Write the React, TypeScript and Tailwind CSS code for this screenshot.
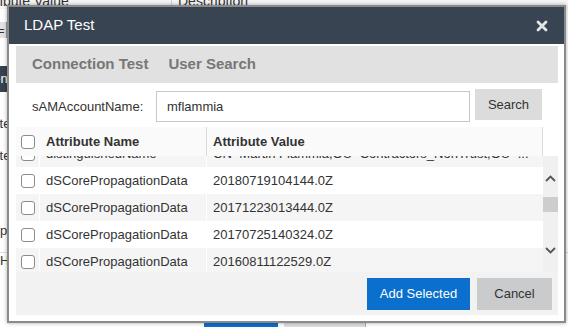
import React from 'react';

const rows = [
  { name: 'distinguishedName', value: 'CN=Martin Flammia,OU=Contractors_NonTrust,OU=...' },
  { name: 'dSCorePropagationData', value: '20180719104144.0Z' },
  { name: 'dSCorePropagationData', value: '20171223013444.0Z' },
  { name: 'dSCorePropagationData', value: '20170725140324.0Z' },
  { name: 'dSCorePropagationData', value: '20160811122529.0Z' },
];

function Checkbox() {
  return <span className="block h-[14px] w-[14px] rounded-[3px] border border-[#8c8c8c] bg-white" />;
}

function Chevron({ up }: { up?: boolean }) {
  return (
    <svg width="15" height="7" viewBox="0 0 15 7" className="block">
      <path
        d={up ? 'M3 6 L7.5 1.5 L12 6' : 'M3 1 L7.5 5.5 L12 1'}
        fill="none"
        stroke="#555"
        strokeWidth="1.8"
      />
    </svg>
  );
}

// the page behind the modal, only slivers of it show
function BackgroundPage() {
  return (
    <div className="flex flex-col text-[13px] text-[#333]">
      <div className="-mt-[7px] flex h-[16px] bg-[#f5f5f5] text-[14px] leading-[16px]">
        <div className="-ml-[30px] w-[202px] whitespace-nowrap border-r border-[#cfcfcf] pl-[8px]">Attribute Value</div>
        <div className="pl-[6px]">Description</div>
      </div>
      <div className="mt-[13px] flex h-[16px] w-[7px] items-center overflow-hidden border-r border-[#999] bg-[#e2e2e2] leading-none">
        <span className="-ml-[3px]">=</span>
      </div>
      <div className="-ml-[30px] mt-[28px] flex h-[26px] w-[100px] items-center bg-[#37424f] pl-[8px] text-white">
        Client
      </div>
      <div className="-ml-[38px] mt-[24px] h-[16px] whitespace-nowrap leading-[16px]">Attribute</div>
      <div className="-ml-[38px] mt-[16px] h-[16px] whitespace-nowrap leading-[16px]">Attribute</div>
      <div className="-ml-[29px] mt-[59px] h-[16px] whitespace-nowrap leading-[16px]">Group</div>
      <div className="mt-[13px] h-[16px] whitespace-nowrap border-t border-[#ddd] leading-[16px]">Home</div>
      <div className="mt-[52px] flex h-[30px]">
        <div className="ml-[204px] w-[74px] bg-[#0b6fcc]" />
        <div className="ml-[6px] w-[82px] border-r border-[#aaa] bg-[#dedede]" />
      </div>
    </div>
  );
}

export default function App() {
  return (
    <div className="relative h-[327px] w-[568px] overflow-hidden bg-white font-['Liberation_Sans',Arial,sans-serif]">
      <BackgroundPage />

      <div className="absolute left-[7px] top-[5px] flex h-[318px] w-[559px] flex-col border-2 border-[#8b8b8b] bg-white shadow-[0_0_4px_rgba(0,0,0,0.35)]">
        <div className="flex h-[37px] shrink-0 items-center justify-between bg-[#384451] pl-[15px] pr-[16px]">
          <span className="text-[15px] text-white">LDAP Test</span>
          <svg width="12" height="12" viewBox="0 0 12 12">
            <path d="M2 2 L10 10 M10 2 L2 10" stroke="#e6e6e6" strokeWidth="2.8" strokeLinecap="round" />
          </svg>
        </div>

        <div className="flex-1 pb-[6px] pl-[7px] pr-[6px] pt-[2px]">
          <div className="flex h-full flex-col">
            {/* tabs */}
            <div className="flex h-[37px] shrink-0 items-center gap-[20px] bg-[#e1e1e1] pl-[16px] text-[15px] font-bold text-[#777]">
              <span>Connection Test</span>
              <span>User Search</span>
            </div>

            {/* search row */}
            <div className="flex h-[44px] shrink-0 items-start bg-white pl-[16px] pt-[6px] text-[13px] text-[#333]">
              <label className="mt-[2px] flex h-[31px] w-[124px] items-center">sAMAccountName:</label>
              <div className="mt-[2px] flex h-[31px] w-[314px] items-center border border-[#c8c8c8] px-[10px]">mflammia</div>
              <button className="ml-[5px] h-[31px] w-[67px] bg-[#dcdcdc] text-[#333]">Search</button>
            </div>

            {/* table header */}
            <div className="flex h-[29px] shrink-0 text-[13px] font-bold text-[#333]">
              <div className="flex w-[527px] bg-[#fafafa]">
                <div className="flex w-[24px] items-center pl-[5px]">
                  <Checkbox />
                </div>
                <div className="flex w-[167px] items-center border-r border-[#dcdcdc] pl-[6px]">Attribute Name</div>
                <div className="flex flex-1 items-center border-r border-[#dcdcdc] pl-[6px]">Attribute Value</div>
              </div>
              <div className="w-[15px] bg-white" />
            </div>

            {/* table body */}
            <div className="flex h-[116px] shrink-0">
              <div className="w-[527px] overflow-hidden">
                {rows.map((r, i) => (
                  <div
                    key={i}
                    className={`flex h-[27px] text-[13px] text-[#333] ${i % 2 === 0 ? 'bg-[#f5f5f5]' : 'bg-white'} ${i === 0 ? '-mt-[16px]' : ''}`}
                  >
                    <div className="flex w-[24px] items-center border-r border-white pl-[5px]">
                      <Checkbox />
                    </div>
                    <div className="flex w-[167px] items-center border-r border-white pl-[6px]">{r.name}</div>
                    <div className="min-w-0 flex-1 truncate pl-[6px] pr-[10px] leading-[27px]">{r.value}</div>
                  </div>
                ))}
              </div>
              <div className="flex w-[15px] flex-col bg-[#f0f0f0] pt-[19px]">
                <Chevron up />
                <div className="mt-[15px] h-[15px] bg-[#cdcdcd]" />
                <div className="mt-[35px]">
                  <Chevron />
                </div>
              </div>
            </div>

            {/* footer buttons */}
            <div className="flex flex-1 items-start justify-end gap-[7px] bg-[#f2f2f2] pr-[6px] pt-[6px] text-[13px]">
              <button className="h-[32px] w-[103px] bg-[#0a6fcd] text-white">Add Selected</button>
              <button className="h-[32px] w-[75px] bg-[#c9cbcd] text-[#333]">Cancel</button>
            </div>
          </div>
        </div>
      </div>
    </div>
  );
}
